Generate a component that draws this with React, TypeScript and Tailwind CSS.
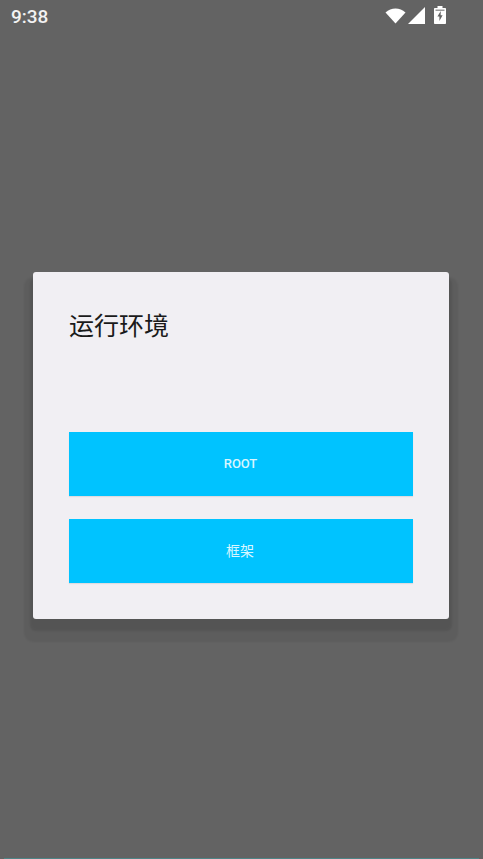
import React from 'react';

const cjk = "font-['Roboto','Noto_Sans_CJK_SC',sans-serif]";

const StatusIcons = () => (
  <div className="flex items-start">
    <svg width="21" height="16" viewBox="0 0 21 16" className="mt-[8px]">
      <path d="M0.5 4.5C3.5 1.8 6.8 0.5 10.5 0.5C14.2 0.5 17.5 1.8 20.5 4.5L10.5 15.5Z" fill="#fff" />
    </svg>
    <svg width="17" height="17" viewBox="0 0 17 17" className="mt-[7px] ml-[2px]">
      <path d="M17 0V17H0Z" fill="#fff" />
    </svg>
    <svg width="12" height="18" viewBox="0 0 12 18" className="mt-[6px] ml-[9px]">
      <path
        fillRule="evenodd"
        d="M3.5 0H8.5V2H11C11.6 2 12 2.4 12 3V17C12 17.6 11.6 18 11 18H1C0.4 18 0 17.6 0 17V3C0 2.4 0.4 2 1 2H3.5ZM6.8 5L3.4 10.6H5.4V15L8.6 9.2H6.6Z"
        fill="#fff"
      />
      <rect x="1.5" y="3.5" width="9" height="1.5" fill="#9a9a9a" />
    </svg>
  </div>
);

export default function App() {
  return (
    <div className={`flex h-screen w-full flex-col overflow-hidden bg-[#636363] ${cjk}`}>
      {/* Status bar */}
      <div className="flex h-[33px] shrink-0 items-start justify-between pl-[11px] pr-[37px]">
        <span className="pt-[6px] text-[19px] leading-[21px] font-medium text-[#f2f2f2]">9:38</span>
        <StatusIcons />
      </div>

      {/* Dialog */}
      <div className="flex-1 px-[33px] pt-[239px] pr-[34px]">
        <div className="rounded-[3px] bg-[#f1eff3] px-[36px] pt-[37px] pb-[36px] shadow-[0_9px_2px_3px_rgba(0,0,0,0.09),0_14px_2px_9px_rgba(0,0,0,0.06)]">
          <h1 className="h-[123px] text-[25px] leading-[36px] font-normal text-[#1a1a1a]">运行环境</h1>
          <div className="flex flex-col gap-[23px]">
            <button className="flex h-[64px] items-center justify-center bg-[#00c3ff] pr-[1px] text-[13px] font-medium tracking-[-0.1px] text-[#d8f6ff] shadow-[0_1px_1px_rgba(0,0,0,0.08)]">
              ROOT
            </button>
            <button className="flex h-[64px] items-center justify-center bg-[#00c3ff] pr-[2px] text-[14px] text-[#d8f6ff] shadow-[0_1px_1px_rgba(0,0,0,0.08)]">
              框架
            </button>
          </div>
        </div>
      </div>

      <div className="mx-[4px] h-px shrink-0 bg-[#4f8486]" />
    </div>
  );
}
